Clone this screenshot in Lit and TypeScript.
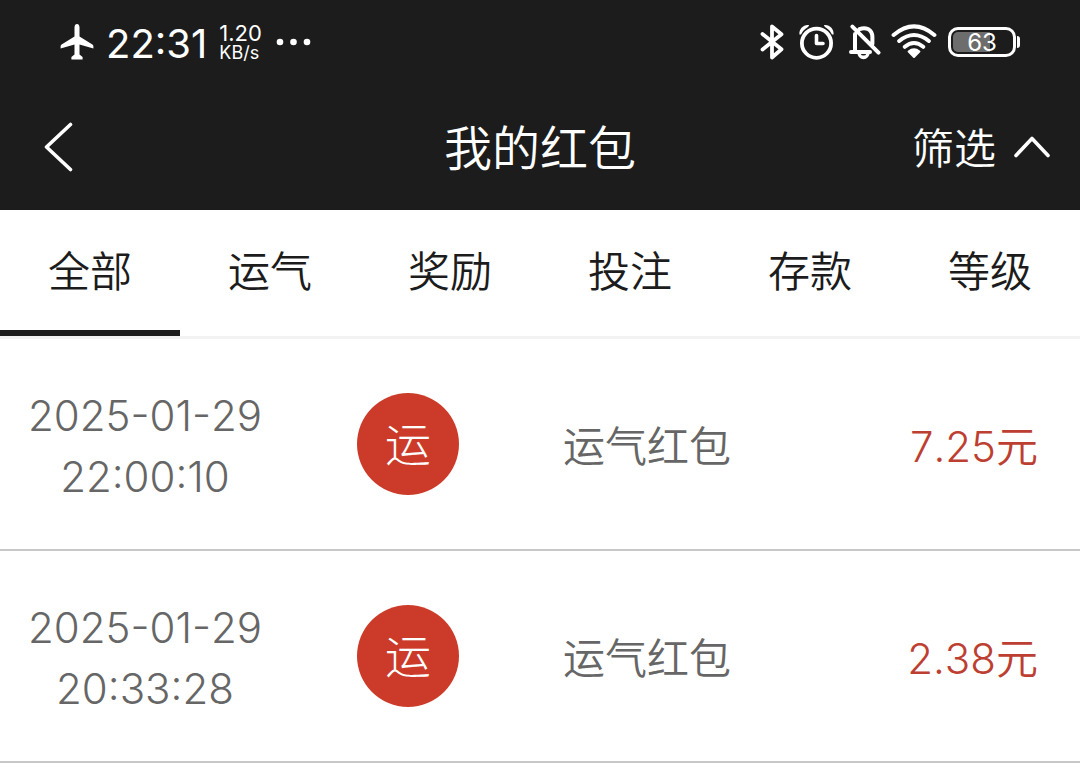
import { LitElement, html, svg, css } from "lit";
import { customElement, property, state } from "lit/decorators.js";
import { classMap } from "lit/directives/class-map.js";

interface Packet {
  date: string;
  time: string;
  badge: string;
  name: string;
  amount: string;
}

const TABS = ["全部", "运气", "奖励", "投注", "存款", "等级"];

const PACKETS: Packet[] = [
  { date: "2025-01-29", time: "22:00:10", badge: "运", name: "运气红包", amount: "7.25元" },
  { date: "2025-01-29", time: "20:33:28", badge: "运", name: "运气红包", amount: "2.38元" },
];

const stroke = (d: string, width: number) => svg`<path d=${d} fill="none" stroke="currentColor"
  stroke-width=${width} stroke-linecap="round" stroke-linejoin="round"></path>`;

@customElement("status-bar")
class StatusBar extends LitElement {
  static styles = css`
    :host {
      display: flex;
      align-items: center;
      justify-content: space-between;
      height: 84px;
      padding: 0 60px;
      color: #fff;
      font-family: Inter, "Noto Sans CJK SC", sans-serif;
      font-weight: 400;
    }
    .side {
      display: flex;
      align-items: center;
    }
    svg {
      display: block;
      flex: none;
    }
    .clock {
      margin: 4px 12px 0 12px;
      font-size: 40px;
      line-height: 48px;
    }
    .speed {
      display: grid;
      margin: 2px 14px 0 0;
      font-size: 22px;
      line-height: 20px;
      font-kerning: none;
    }
    .unit {
      font-size: 18px;
    }
    .icons {
      gap: 15px;
    }
    .tight {
      display: flex;
      gap: 10px;
    }
    .battery {
      display: flex;
      align-items: center;
      gap: 1px;
      margin-left: -4px;
    }
    .cell {
      box-sizing: border-box;
      width: 68px;
      height: 30px;
      border: 3px solid #fff;
      border-radius: 10px;
      padding: 2px;
      font-size: 24px;
      line-height: 22px;
      text-align: center;
    }
    .charge {
      height: 20px;
      border-radius: 5px;
      background: linear-gradient(90deg, #6d6d6d 63%, transparent 63%);
    }
    .cap {
      width: 3px;
      height: 12px;
      border-radius: 0 3px 3px 0;
      background: #fff;
    }
  `;

  render() {
    return html`
      <div class="side">
        <svg width="34" height="36" viewBox="0 0 34 36" aria-hidden="true">
          <path fill="currentColor" d="M17 0C18.7 0 19.5 1.6 19.5 3.6V12.4L32.4 20.6Q33.4 21.3 33.4 22.4V24.4L19.5 20.6V30.4L22.6 33V35.4H11.4V33L14.5 30.4V20.6L.6 24.4V22.4Q.6 21.3 1.6 20.6L14.5 12.4V3.6C14.5 1.6 15.3 0 17 0Z"></path>
        </svg>
        <span class="clock">22:31</span>
        <span class="speed"><span>1.20</span><span class="unit">KB/s</span></span>
        <svg width="36" height="8" viewBox="0 0 36 8" aria-hidden="true">
          <circle cx="4" cy="4" r="3.3" fill="currentColor"></circle>
          <circle cx="17.5" cy="4" r="3.3" fill="currentColor"></circle>
          <circle cx="31" cy="4" r="3.3" fill="currentColor"></circle>
        </svg>
      </div>
      <div class="side icons">
        <svg width="24" height="36" viewBox="0 0 24 36" aria-hidden="true">
          ${stroke("M2.5 10L21.5 25.2L12 33.5V2.5L21.5 10.2L2.5 25.6", 3.8)}
        </svg>
        <svg width="35" height="36" viewBox="0 0 35 36" aria-hidden="true">
          <circle cx="17.5" cy="19.2" r="14.6" fill="none" stroke="currentColor" stroke-width="3.8"></circle>
          ${stroke("M17.5 11.5V19.5H24", 3.6)}
          <path fill="currentColor" d="M.4 10.5C0 5 4.5 .3 10.2 1.2Q9.6 3 6.6 4.8Q3 7.3 2 10.4ZM34.6 10.5C35 5 30.5 .3 24.8 1.2Q25.4 3 28.4 4.8Q32 7.3 33 10.4Z"></path>
        </svg>
        <div class="tight">
          <svg width="32" height="36" viewBox="0 0 32 36" aria-hidden="true">
            ${stroke("M6 10V26M2 28H21M10.5 5.2Q15 3.2 19 5Q23.4 7.4 23.4 13V20M3.4 2.6L29.5 28.6", 4)}
            <path fill="currentColor" d="M8 28H21Q20 35.2 14.5 35.2Q9 35.2 8 28Z"></path>
            <path fill="#1c1c1c" d="M11.8 29.9H17.2Q16.8 31.5 14.5 31.5Q12.2 31.5 11.8 29.9Z"></path>
          </svg>
          <svg width="46" height="36" viewBox="0 0 46 36" aria-hidden="true">
            ${stroke("M2.6 11Q23 -6.2 43.4 11M8.2 17Q23 5 37.8 17M13.8 22.8Q23 15.2 32.2 22.8", 4)}
            <path fill="currentColor" stroke="currentColor" stroke-width="2" stroke-linejoin="round" d="M17.6 27.6Q23 23.2 28.4 27.6L23 33Z"></path>
          </svg>
        </div>
        <div class="battery">
          <div class="cell"><div class="charge">63</div></div>
          <div class="cap"></div>
        </div>
      </div>
    `;
  }
}

@customElement("packet-row")
class PacketRow extends LitElement {
  @property({ attribute: false }) packet!: Packet;

  static styles = css`
    :host {
      display: grid;
      grid-template-columns: 290fr 236fr 242fr 312fr;
      align-items: center;
      min-height: 210px;
      border-bottom: 2px solid #c8c8c8;
      color: #666;
      font-family: Inter, "Noto Sans CJK SC", sans-serif;
      font-weight: 350;
      font-size: 42px;
      line-height: 61px;
      text-align: center;
      font-kerning: none;
    }
    .when {
      display: grid;
      padding-top: 4px;
      font-weight: 300;
    }
    .badge {
      justify-self: center;
      width: 102px;
      border-radius: 50%;
      background: #cc3b29;
      color: #fff;
      font-weight: 300;
      font-size: 46px;
      line-height: 102px;
    }
    .name,
    .amount {
      padding-top: 4px;
    }
    .amount {
      padding-right: 42px;
      color: #bd3f31;
      text-align: right;
    }
  `;

  render() {
    const p = this.packet;
    return html`
      <time class="when" datetime="${p.date}T${p.time}"><span>${p.date}</span><span>${p.time}</span></time>
      <span class="badge">${p.badge}</span>
      <span class="name">${p.name}</span>
      <span class="amount">${p.amount}</span>
    `;
  }
}

@customElement("app-root")
class AppRoot extends LitElement {
  @state() private active = 0;

  static styles = css`
    :host {
      display: block;
      min-height: 100vh;
      background: #fff;
      color: #1c1c1c;
      font-family: Inter, "Noto Sans CJK SC", sans-serif;
      font-weight: 350;
    }
    .top {
      background: #1c1c1c;
      color: #fff;
    }
    .nav {
      display: grid;
      grid-template-columns: 1fr auto 1fr;
      align-items: center;
      height: 126px;
      padding: 0 28px;
    }
    button {
      margin: 0;
      padding: 0;
      border: 0;
      background: none;
      color: inherit;
      font: inherit;
      cursor: pointer;
    }
    svg {
      display: block;
    }
    .back {
      justify-self: start;
      padding-left: 14px;
    }
    h1 {
      margin: 0;
      padding-top: 4px;
      font-weight: 350;
      font-size: 48px;
      line-height: 72px;
    }
    .filter {
      display: flex;
      align-items: center;
      justify-self: end;
      gap: 16px;
      font-size: 42px;
      line-height: 60px;
    }
    .label {
      padding-top: 4px;
    }
    .tabs {
      display: grid;
      grid-template-columns: repeat(6, 1fr);
      border-bottom: 3px solid #f2f2f2;
    }
    .tab {
      padding-top: 4px;
      border-bottom: 6px solid transparent;
      font-size: 42px;
      line-height: 116px;
    }
    .selected {
      border-color: #1c1c1c;
    }
  `;

  render() {
    return html`
      <header class="top">
        <status-bar></status-bar>
        <div class="nav">
          <button class="back" aria-label="返回">
            <svg width="32" height="50" viewBox="0 0 32 50">${stroke("M28.5 2.5L4.5 25L28.5 47.5", 3.6)}</svg>
          </button>
          <h1>我的红包</h1>
          <button class="filter">
            <span class="label">筛选</span>
            <svg width="40" height="24" viewBox="0 0 40 24" aria-hidden="true">${stroke("M4 20.5L20 3.5L36 20.5", 3.6)}</svg>
          </button>
        </div>
      </header>
      <div class="tabs" role="tablist">
        ${TABS.map(
          (label, i) => html`<button
            role="tab"
            aria-selected=${i === this.active}
            class=${classMap({ tab: true, selected: i === this.active })}
            @click=${() => (this.active = i)}
          >${label}</button>`
        )}
      </div>
      <main>${PACKETS.map((p) => html`<packet-row .packet=${p}></packet-row>`)}</main>
    `;
  }
}
